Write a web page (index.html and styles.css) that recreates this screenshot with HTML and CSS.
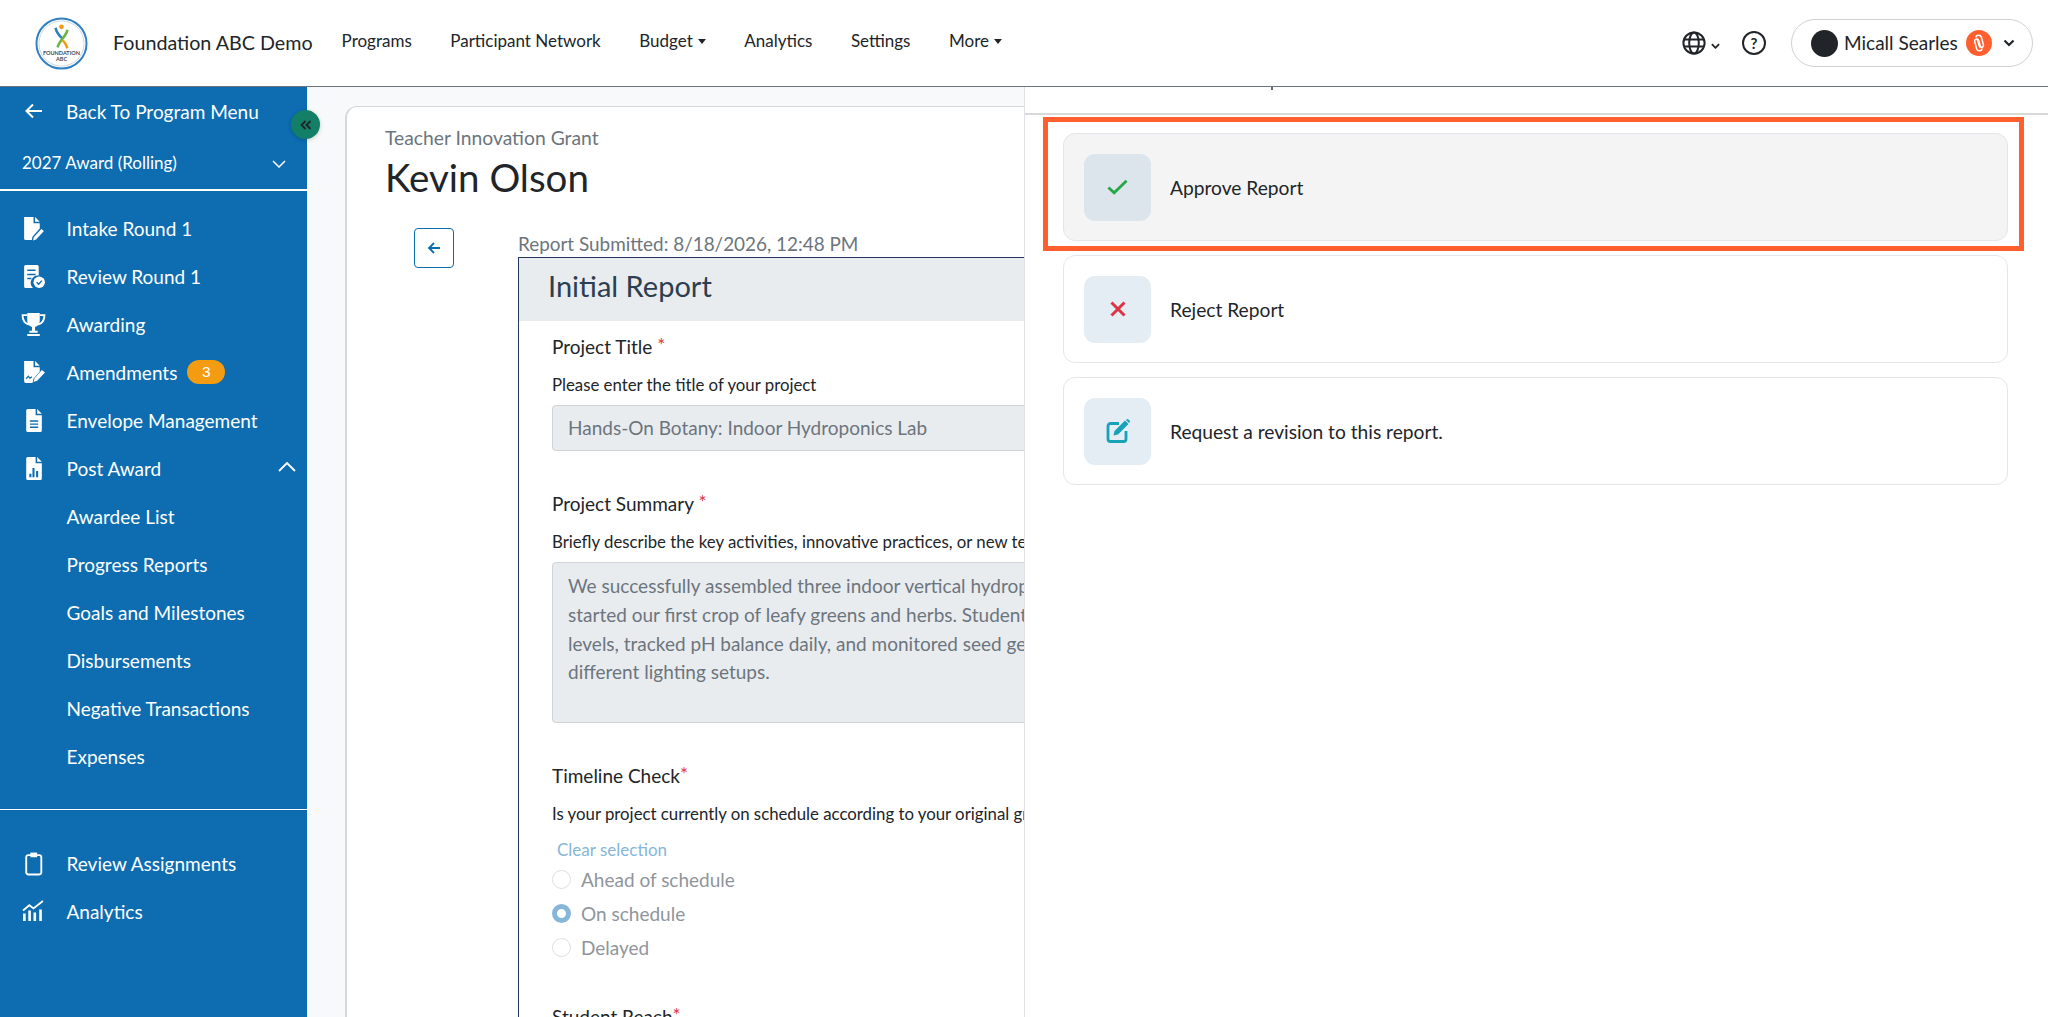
FILE: index.html
```html
<!DOCTYPE html>
<html lang="en">
<head>
    <meta charset="UTF-8">
    <title>Initial Report - Kevin Olson</title>
    <link rel="stylesheet" href="styles.css">
</head>
<body>
    <header class="topbar">
        <div class="logo">
            <svg class="logo-art" viewBox="0 0 54 54">
                <circle cx="27" cy="27" r="25.5" fill="#fff" stroke="#2f7fc1" stroke-width="2"/>
                <circle cx="27" cy="27" r="23" fill="none" stroke="#c9d6e2" stroke-width="1"/>
                <circle cx="27" cy="10" r="2.4" fill="#f39c12"/>
                <path d="M21 11c1 6 4 8 7 11" fill="none" stroke="#2f7fc1" stroke-width="2.6"/>
                <path d="M33 13c-1 7-8 10-10 18" fill="none" stroke="#6cb33f" stroke-width="2.6"/>
                <path d="M28 24c3 2 4 5 5 8" fill="none" stroke="#f39c12" stroke-width="2.6"/>
            </svg>
            <span class="logo-text">FOUNDATION<br>ABC</span>
        </div>
        <span class="brand">Foundation ABC Demo</span>
        <nav class="topnav">
            <a>Programs</a>
            <a>Participant Network</a>
            <a class="caret">Budget</a>
            <a>Analytics</a>
            <a>Settings</a>
            <a class="caret">More</a>
        </nav>
        <div class="top-actions">
            <svg class="globe" viewBox="0 0 24 24" fill="none" stroke="#212529" stroke-width="2">
                <circle cx="12" cy="12" r="10.6"/>
                <ellipse cx="12" cy="12" rx="4.8" ry="10.6"/>
                <path d="M2 8.4h20M2 15.6h20"/>
            </svg>
            <svg class="mini-chevron" viewBox="0 0 10 6" fill="none" stroke="#212529" stroke-width="2"><path d="M1 1l4 4 4-4"/></svg>
            <span class="help">?</span>
            <div class="user-pill">
                <span class="avatar"></span>
                <span class="user-name">Micall Searles</span>
                <svg class="user-badge" viewBox="0 0 26 26" fill="none" stroke="#fff" stroke-width="1.5">
                    <circle cx="13" cy="13" r="13" fill="#ff5f2e" stroke="none"/>
                    <path d="M10 7.5c0-3 4.500-3 5.300-.5l2 7.500c.8 3-3.300 4-4.100 1.200L11 8.700"/>
                    <path d="M16 18.500c0 3-4.500 3-5.300.5l-2-7.500c-.5-2.500 3-3.500 4-1l2 6.800"/>
                </svg>
                <svg class="pill-chevron" viewBox="0 0 12 8" fill="none" stroke="#212529" stroke-width="2.200"><path d="M1.500 1.500L6 6l4.500-4.500"/></svg>
            </div>
        </div>
    </header>

    <div class="page">
        <aside class="sidebar">
            <a class="back-link">
                <svg class="back-arrow" viewBox="0 0 18 16" fill="none" stroke="#fff" stroke-width="2"><path d="M17 8H2M8 1.500L1.500 8 8 14.500"/></svg>
                Back To Program Menu
            </a>
            <div class="cycle-select">
                <span>2027 Award (Rolling)</span>
                <svg class="cycle-chevron" viewBox="0 0 14 8" fill="none" stroke="#fff" stroke-width="1.500"><path d="M1 1l6 6 6-6"/></svg>
            </div>
            <ul class="side-list side-list-main">
                <li>
                    <svg class="side-icon" viewBox="0 0 24 24" fill="#fff"><path d="M3 1h9v6h6v5l-7 8-.6 3H4.500A1.500 1.500 0 0 1 3 21.500zM13.500 1L18 5.500h-4.500zM19.500 12.500l2.500 2-7.500 8-3 1 .8-3.200z"/></svg>
                    Intake Round 1
                </li>
                <li>
                    <svg class="side-icon" viewBox="0 0 24 24"><path fill="#fff" d="M4.500 1h11A1.500 1.500 0 0 1 17 2.500V11a7 7 0 0 0-5.500 12h-7A1.500 1.500 0 0 1 3 21.500v-19A1.500 1.500 0 0 1 4.500 1z"/><path stroke="#0d6db0" stroke-width="1.500" d="M6 6h8M6 10h8M6 14h4"/><circle cx="17.500" cy="17.500" r="5.500" fill="#fff"/><path fill="none" stroke="#0d6db0" stroke-width="1.300" d="M15 17.500l2 2 3-3.500"/></svg>
                    Review Round 1
                </li>
                <li>
                    <svg class="side-icon" viewBox="0 0 24 24"><path fill="#fff" d="M6 1h12v7a6 6 0 0 1-4.500 6.500V18h2.500v2H8v-2h2.500v-3.500A6 6 0 0 1 6 8zM6 21h12v2H6z"/><path fill="none" stroke="#fff" stroke-width="1.800" d="M6 3H1.500c0 5 1.500 7.500 6 9M18 3h4.500c0 5-1.500 7.500-6 9"/></svg>
                    Awarding
                </li>
                <li>
                    <svg class="side-icon" viewBox="0 0 24 24"><path fill="#fff" d="M3 1h9v6h6v4l-6 7-1 4H4.500A1.500 1.500 0 0 1 3 20.500zM13.500 1L18 5.500h-4.500zM20 9.500l3 2.500-7.500 8-3.500 1 1-3.500z"/><path fill="none" stroke="#0d6db0" stroke-width="1.200" d="M5 18l2-2.500 1.500 2 2-1.500"/></svg>
                    Amendments <span class="count">3</span>
                </li>
                <li>
                    <svg class="side-icon" viewBox="0 0 24 24"><path fill="#fff" d="M6.500 1H14v6h6v14.500a1.500 1.500 0 0 1-1.500 1.500h-12A1.500 1.500 0 0 1 5 21.500v-19A1.500 1.500 0 0 1 6.500 1zM15.500 1L20 5.500h-4.500z"/><path stroke="#0d6db0" stroke-width="1.300" d="M8.500 12.500h8M8.500 15.500h8M8.500 18.500h8"/></svg>
                    Envelope Management
                </li>
                <li>
                    <svg class="side-icon" viewBox="0 0 24 24"><path fill="#fff" d="M6.500 1H14v6h6v14.500a1.500 1.500 0 0 1-1.500 1.500h-12A1.500 1.500 0 0 1 5 21.500v-19A1.500 1.500 0 0 1 6.500 1zM15.500 1L20 5.500h-4.500z"/><path fill="#0d6db0" d="M8 17h2v3.500H8zM11 11.500h2v9h-2zM14.500 14.500h2v6h-2z"/></svg>
                    Post Award
                    <svg class="open-chevron" viewBox="0 0 18 10" fill="none" stroke="#fff" stroke-width="1.800"><path d="M1 9l8-8 8 8"/></svg>
                </li>
                <li class="sub">Awardee List</li>
                <li class="sub">Progress Reports</li>
                <li class="sub">Goals and Milestones</li>
                <li class="sub">Disbursements</li>
                <li class="sub">Negative Transactions</li>
                <li class="sub">Expenses</li>
            </ul>
            <ul class="side-list side-list-extra">
                <li>
                    <svg class="side-icon" viewBox="0 0 24 24" fill="none" stroke="#fff" stroke-width="1.800"><rect x="5" y="4" width="14.500" height="18.500" rx="2"/><path fill="#fff" stroke="none" d="M9 1.500h6.500V6H9z"/></svg>
                    Review Assignments
                </li>
                <li>
                    <svg class="side-icon" viewBox="0 0 24 24"><path fill="none" stroke="#fff" stroke-width="1.800" d="M2 11l6-5 4 3 9-7"/><path fill="#fff" d="M2 14h2.500v7H2zM7 11h2.500v10H7zM12 13h2.500v8H12zM17.500 10H20v11h-2.500z"/></svg>
                    Analytics
                </li>
            </ul>
        </aside>

        <main class="content">
            <section class="card">
                <p class="eyebrow">Teacher Innovation Grant</p>
                <h1 class="person">Kevin Olson</h1>
                <div class="report-row">
                    <button class="back-btn">
                        <svg viewBox="0 0 14 14" fill="none" stroke="#0d6db0" stroke-width="1.800"><path d="M13 7H2M7 2L2 7l5 5"/></svg>
                    </button>
                    <div class="report-col">
                        <p class="submitted">Report Submitted: 8/18/2026, 12:48 PM</p>
                        <div class="report">
                            <h2 class="report-title">Initial Report</h2>
                            <form class="report-form">
                                <div class="field">
                                    <p class="q-label">Project Title <i>*</i></p>
                                    <p class="q-help">Please enter the title of your project</p>
                                    <div class="q-input">Hands-On Botany: Indoor Hydroponics Lab</div>
                                </div>
                                <div class="field">
                                    <p class="q-label">Project Summary <i>*</i></p>
                                    <p class="q-help">Briefly describe the key activities, innovative practices, or new techniques you introduced during this period.</p>
                                    <div class="q-input q-textarea">We successfully assembled three indoor vertical hydroponic towers and<br>started our first crop of leafy greens and herbs. Students measured nutrient<br>levels, tracked pH balance daily, and monitored seed germination under<br>different lighting setups.</div>
                                </div>
                                <div class="field">
                                    <p class="q-label">Timeline Check<i>*</i></p>
                                    <p class="q-help">Is your project currently on schedule according to your original grant timeline?</p>
                                    <a class="clear-link">Clear selection</a>
                                    <label class="radio"><span class="dot"></span>Ahead of schedule</label>
                                    <label class="radio"><span class="dot dot-on"></span>On schedule</label>
                                    <label class="radio"><span class="dot"></span>Delayed</label>
                                </div>
                                <div class="field field-last">
                                    <p class="q-label">Student Reach<i>*</i></p>
                                </div>
                            </form>
                        </div>
                    </div>
                </div>
            </section>
        </main>
    </div>

    <button class="collapse-btn">
        <svg viewBox="0 0 12 10" fill="none" stroke="#212529" stroke-width="1.800"><path d="M5.500 1L1.500 5l4 4M10.500 1l-4 4 4 4"/></svg>
    </button>

    <!-- action panel slides over the report -->
    <aside class="panel">
        <div class="panel-head"><span class="panel-tick"></span></div>
        <div class="panel-body">
            <div class="action action-active">
                <span class="action-icon">
                    <svg viewBox="0 0 22 16" fill="none" stroke="#28a745" stroke-width="3"><path d="M1.500 8.500l6 5.500L20.500 1.500"/></svg>
                </span>
                Approve Report
            </div>
            <div class="action">
                <span class="action-icon">
                    <svg class="icon-x" viewBox="0 0 16 16" fill="none" stroke="#dc3545" stroke-width="3"><path d="M1.500 1.500l13 13M14.500 1.500l-13 13"/></svg>
                </span>
                Reject Report
            </div>
            <div class="action">
                <span class="action-icon">
                    <svg class="icon-edit" viewBox="0 0 24 24"><path fill="none" stroke="#17a2b8" stroke-width="2.800" d="M13 4.500H4.500A2.500 2.500 0 0 0 2 7v13a2.500 2.500 0 0 0 2.500 2.500h13A2.500 2.500 0 0 0 20 20v-8"/><path fill="#17a2b8" d="M19 1.500l3.500 3.500-10.500 10.500-4.500 1 1-4.500zM20.500.5a1.500 1.500 0 0 1 2 0l1 1a1.500 1.500 0 0 1 0 2L23 4 20 1z"/></svg>
                </span>
                Request a revision to this report.
            </div>
        </div>
    </aside>
    <div class="highlight"></div>
</body>
</html>
```
FILE: styles.css
```css
:root {
    --sidebar: #0d6db0;
    --text: #212529;
    --muted: #6c757d;
    --line: #dee2e6;
    --orange: #ff5f2e;
}

* {
    margin: 0;
    padding: 0;
    box-sizing: border-box;
}

html, body {
    height: 100%;
    overflow: hidden;
}

body {
    font-family: Lato, "Noto Sans", sans-serif;
    font-size: 19px;
    color: var(--text);
    background-color: #f8f9fa;
}

/* top bar */
.topbar {
    height: 87px;
    display: flex;
    align-items: center;
    background-color: white;
    border-bottom: 1px solid #6c757d;
    padding-left: 35px;
}

.logo {
    position: relative;
    width: 53px;
    height: 53px;
    flex: none;
}

.logo-art {
    display: block;
    width: 53px;
    height: 53px;
}

.logo-text {
    position: absolute;
    left: 0;
    right: 0;
    top: 33px;
    font-size: 5.500px;
    line-height: 6.500px;
    font-weight: 700;
    color: #3c4a57;
    text-align: center;
}

.brand {
    margin-left: 25px;
    margin-top: -2px;
    font-size: 19.700px;
    white-space: nowrap;
}

.topnav {
    display: flex;
    gap: 38.500px;
    margin-left: 29px;
    margin-top: -6px;
    font-size: 17px;
}

.caret::after {
    content: "";
    display: inline-block;
    margin-left: 5px;
    vertical-align: 3px;
    border-top: 5px solid var(--text);
    border-left: 4.500px solid transparent;
    border-right: 4.500px solid transparent;
}

.top-actions {
    display: flex;
    align-items: center;
    margin-left: auto;
    margin-right: 15px;
}

.globe {
    width: 24px;
    height: 24px;
}

.mini-chevron {
    width: 9px;
    height: 6px;
    margin: 5px 0 0 5px;
}

.help {
    width: 24px;
    height: 24px;
    margin-left: 22px;
    border: 2px solid var(--text);
    border-radius: 50%;
    display: flex;
    align-items: center;
    justify-content: center;
    font-size: 15px;
    font-weight: 700;
}

.user-pill {
    width: 242px;
    height: 48px;
    margin-left: 25px;
    display: flex;
    align-items: center;
    padding-left: 19px;
    border: 1px solid #cfd2d5;
    border-radius: 24px;
}

.avatar {
    width: 27px;
    height: 27px;
    border-radius: 50%;
    background-color: var(--text);
}

.user-name {
    margin-left: 6px;
    margin-top: -2px;
    white-space: nowrap;
}

.user-badge {
    width: 26px;
    height: 26px;
    margin-left: 8px;
}

.pill-chevron {
    width: 12px;
    height: 8px;
    margin-left: 11px;
}

/* sidebar */
.page {
    display: flex;
    height: calc(100vh - 87px);
}

.sidebar {
    width: 307px;
    flex: none;
    background-color: var(--sidebar);
    color: white;
}

.back-link {
    height: 48px;
    display: flex;
    align-items: center;
    padding-left: 25px;
    gap: 23px;
}

.back-arrow {
    width: 18px;
    height: 16px;
}

.cycle-select {
    height: 54px;
    display: flex;
    align-items: center;
    justify-content: space-between;
    padding: 0 21px 0 22px;
    font-size: 17px;
}

.cycle-chevron {
    width: 14px;
    height: 8px;
    margin-top: 3px;
}

.side-list {
    list-style: none;
}

.side-list-main {
    border-top: 2px solid white;
    padding-top: 13px;
    padding-bottom: 29px;
    border-bottom: 1px solid white;
}

.side-list-extra {
    padding-top: 29px;
}

.side-list li {
    position: relative;
    height: 48px;
    display: flex;
    align-items: center;
    padding-left: 21px;
    gap: 20.500px;
}

.side-list li.sub {
    padding-left: 66.500px;
}

.side-icon {
    width: 25px;
    height: 25px;
    flex: none;
}

.count {
    width: 38px;
    height: 24px;
    margin-left: -10.500px;
    border-radius: 12px;
    background-color: #f39c12;
    font-family: "Liberation Sans", sans-serif;
    font-size: 15.500px;
    display: flex;
    align-items: center;
    justify-content: center;
}

.open-chevron {
    position: absolute;
    right: 11px;
    top: 18px;
    width: 18px;
    height: 10px;
}

.collapse-btn {
    position: absolute;
    left: 291px;
    top: 110px;
    width: 29px;
    height: 29px;
    border: none;
    border-radius: 50%;
    background-color: #127f66;
    box-shadow: 0 1px 4px rgba(0, 0, 0, 0.2);
    display: flex;
    align-items: center;
    justify-content: center;
}

.collapse-btn svg {
    width: 12px;
    height: 10px;
}

/* main card */
.content {
    flex: 1;
    min-width: 0;
    padding: 19px 0 0 38px;
    overflow: hidden;
}

.card {
    width: 1660px;
    height: 1100px;
    padding: 19px 0 0 38px;
    background-color: white;
    border: 1px solid #d6d8da;
    border-left-width: 2px;
    border-radius: 12px 0 0 0;
}

.eyebrow {
    line-height: 24px;
    font-size: 19.300px;
    color: var(--muted);
}

.person {
    margin-top: 3px;
    font-size: 38.500px;
    line-height: 48px;
    font-weight: 400;
}

.report-row {
    display: flex;
    align-items: flex-start;
    margin-top: 27px;
    padding-left: 29px;
}

.back-btn {
    width: 40px;
    height: 40px;
    flex: none;
    margin-right: 64px;
    background-color: white;
    border: 1px solid var(--sidebar);
    border-radius: 4px;
    display: flex;
    align-items: center;
    justify-content: center;
}

.back-btn svg {
    width: 14px;
    height: 14px;
}

.report-col {
    flex: 1;
}

.submitted {
    padding-top: 4px;
    margin-bottom: 2px;
    font-size: 18.900px;
    line-height: 23px;
    color: var(--muted);
}

.report {
    border: 1px solid #24385b;
}

.report-title {
    height: 63px;
    padding-left: 29px;
    font-size: 29px;
    font-weight: 400;
    line-height: 56px;
    color: #2c3e50;
    background-color: #e9ecef;
}

.report-form {
    padding: 11px 0 0 33px;
}

.field {
    margin-bottom: 38px;
}

.q-label {
    line-height: 26px;
}

.q-label i {
    font-style: normal;
    color: #dc3545;
    vertical-align: 2px;
    font-size: 19px;
}

.q-help {
    margin-top: 14px;
    font-size: 16.800px;
    line-height: 22px;
    white-space: nowrap;
}

.q-input {
    width: 900px;
    height: 46px;
    margin-top: 9px;
    padding: 0 15px;
    line-height: 44px;
    color: var(--muted);
    background-color: #e9ecef;
    border: 1px solid #ced4da;
    border-radius: 4px;
}

.q-textarea {
    height: 161px;
    padding-top: 9px;
    line-height: 28.800px;
    white-space: nowrap;
}

.clear-link {
    display: block;
    margin: 14px 0 0 5px;
    font-size: 17px;
    line-height: 22px;
    color: #86b6d8;
}

.radio {
    display: flex;
    align-items: center;
    gap: 10px;
    height: 34px;
    color: #8f959b;
}

.radio:first-of-type {
    margin-top: 1px;
}

.dot {
    width: 19px;
    height: 19px;
    border: 1px solid #dcdfe3;
    border-radius: 50%;
    background-color: white;
}

.dot-on {
    border: 5px solid #86b6d8;
}

.field-last {
    margin: 5px 0 0;
}

/* action panel */
.panel {
    position: absolute;
    left: 1024px;
    top: 87px;
    right: 0;
    bottom: 0;
    background-color: white;
    border-left: 1px solid var(--line);
}

.panel-head {
    position: relative;
    height: 28px;
    border-bottom: 2px solid #d9d9d9;
}

.panel-tick {
    position: absolute;
    left: 246px;
    top: 0;
    width: 2px;
    height: 3px;
    background-color: #5c6a78;
}

.panel-body {
    display: flex;
    flex-direction: column;
    gap: 14px;
    padding: 18px 40px 0 38px;
}

.action {
    height: 108px;
    display: flex;
    align-items: center;
    gap: 19px;
    padding-left: 20px;
    border: 1px solid #e3e6ea;
    border-radius: 12px;
    font-size: 19.200px;
}

.action-active {
    background-color: #f4f4f4;
}

.action-icon {
    width: 67px;
    height: 67px;
    flex: none;
    border-radius: 11px;
    background-color: #e5edf4;
    display: flex;
    align-items: center;
    justify-content: center;
}

.action-active .action-icon {
    background-color: #dce4ec;
}

.action-icon svg {
    width: 21px;
    height: 16px;
}

.action-icon .icon-x {
    width: 16px;
    height: 16px;
}

.action-icon .icon-edit {
    width: 24px;
    height: 24px;
}

.highlight {
    position: absolute;
    left: 1043px;
    top: 117px;
    width: 981px;
    height: 134px;
    border: 5px solid var(--orange);
    pointer-events: none;
}
```
